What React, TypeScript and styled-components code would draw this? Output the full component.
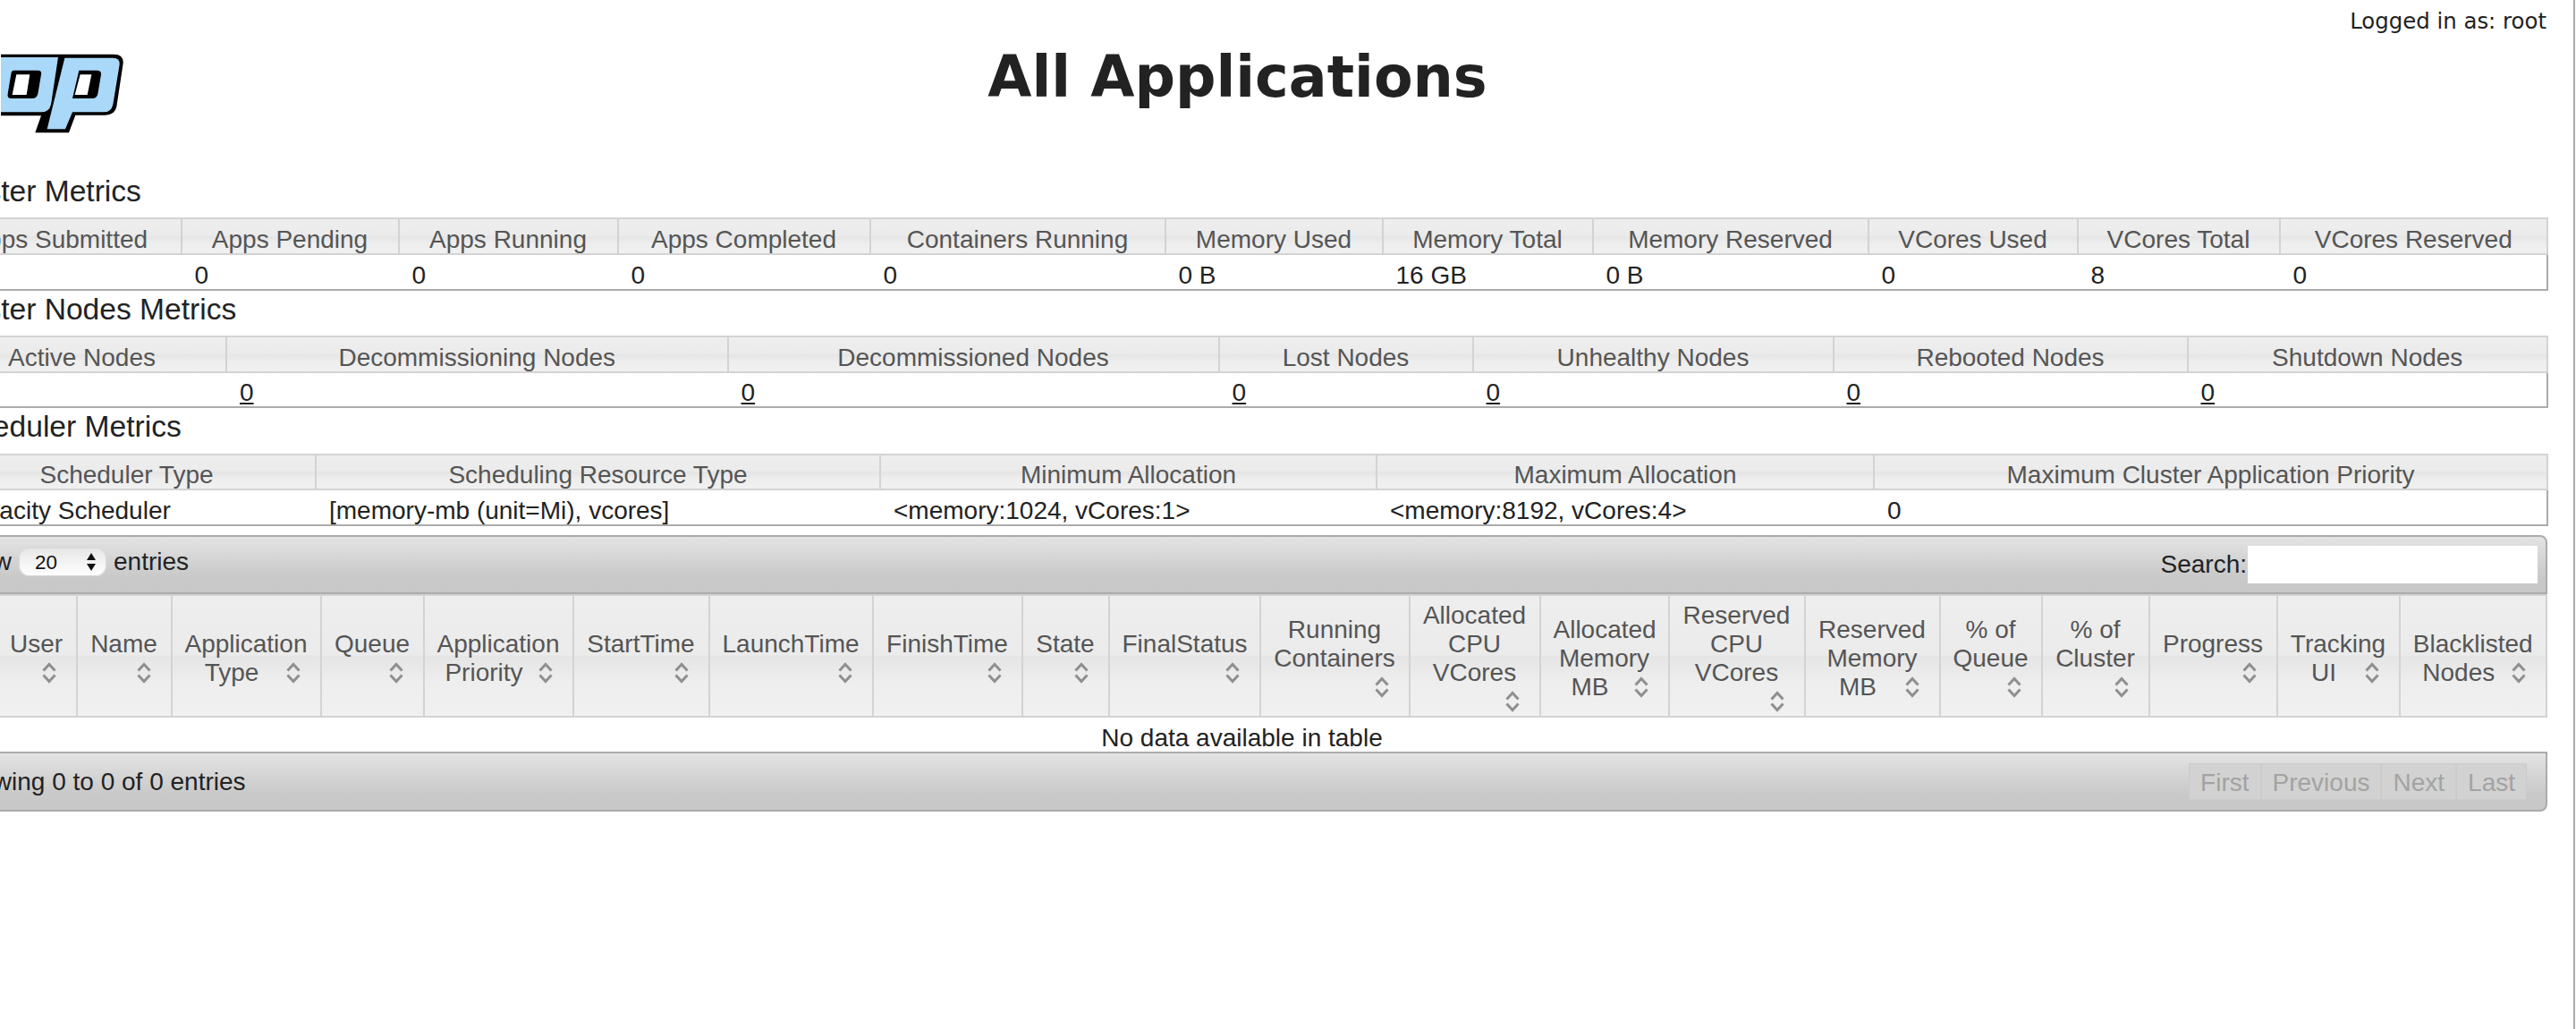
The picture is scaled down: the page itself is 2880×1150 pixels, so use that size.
import React from "react";
import styled, { createGlobalStyle } from "styled-components";

const Global = createGlobalStyle`
  html, body { margin: 0; padding: 0; background: #fff; }
  body { font-family: "Liberation Sans", Arial, sans-serif; font-size: 28px; color: #222; }
`;

const Page = styled.div`
  width: 2877px;
  height: 1150px;
  margin-right: 1px;
  border-right: 2px solid #a9a9a9;
  overflow: hidden;
`;

const Content = styled.div`
  width: 2919px;
  margin-left: -71px;
`;

const Header = styled.header`
  height: 193px;
  display: grid;
  grid-template-columns: 1fr auto 1fr;
`;

const LogoWrap = styled.div`
  padding: 50px 0 0 72px;
`;

const LogoArt = styled.svg`
  display: block;
  filter: blur(0.6px);
`;

const Title = styled.h1`
  margin: 50px 10px 0 0;
  font-family: "DejaVu Sans", Verdana, sans-serif;
  font-weight: 700;
  font-size: 63.6px;
  line-height: 72px;
  color: #222;
`;

const Logged = styled.div`
  justify-self: end;
  padding-top: 10px;
  padding-right: 1px;
  font-family: "DejaVu Sans", Verdana, sans-serif;
  font-size: 24.4px;
  line-height: 28px;
  color: #222;
`;

const SectionTitle = styled.h3<{ $h: number }>`
  margin: 0;
  height: ${(p) => p.$h}px;
  padding-left: 5px;
  font-weight: 400;
  font-size: 33.6px;
  line-height: 42px;
  color: #222;
`;

const headBg = `linear-gradient(#eeeeee 0%, #ebebeb 49.5%, #e5e5e5 50%, #eeeeee 72%, #f0f0f0 100%)`;

const StatTable = styled.table<{ $hp: number; $bp: number }>`
  width: 2918px;
  table-layout: fixed;
  border-collapse: collapse;
  th {
    padding: ${(p) => p.$hp}px 14px 0;
    border: 2px solid #d3d3d3;
    background: ${headBg};
    font-weight: 400;
    line-height: 30px;
    text-align: center;
    color: #555;
    white-space: nowrap;
  }
  td {
    padding: ${(p) => p.$bp}px 14px 0 15px;
    border-bottom: 2px solid #ababab;
    line-height: 30px;
    text-align: left;
    color: #222;
    white-space: nowrap;
  }
  td:first-child { padding-left: 18px; }
  td:last-child { border-right: 2px solid #ababab; }
`;

const NodeLink = styled.a`
  color: #222;
  text-decoration: underline;
`;

const Toolbar = styled.div`
  margin-top: 10px;
  height: 66px;
  box-sizing: border-box;
  display: flex;
  align-items: center;
  justify-content: space-between;
  padding: 0 9px 0 12px;
  border: 2px solid #ababab;
  border-radius: 8px 8px 0 0;
  background: linear-gradient(#e3e3e3 0%, #c9c9c9 72%, #c8c8c8 100%);
`;

const LengthGroup = styled.label`
  display: flex;
  align-items: center;
  gap: 8px;
  padding-bottom: 6px;
`;

const SelectBox = styled.span`
  position: relative;
  display: inline-block;
  height: 32px;
`;

const PageSelect = styled.select`
  display: block;
  appearance: none;
  width: 98px;
  height: 32px;
  padding: 0 0 0 18px;
  border: 0;
  border-radius: 12px;
  background: linear-gradient(#e6e6e6 0%, #f4f4f4 55%, #ffffff 100%);
  box-shadow: inset 0 0 0 1px #d6d6d6;
  font-family: "Liberation Sans", Arial, sans-serif;
  font-size: 22.4px;
  color: #111;
`;

const SelectArrows = styled.svg`
  position: absolute;
  right: 12px;
  top: 6px;
  width: 10px;
  height: 20px;
  pointer-events: none;
`;

const SearchGroup = styled.label`
  display: flex;
  align-items: center;
  color: #222;
`;

const SearchInput = styled.input`
  width: 324px;
  height: 42px;
  box-sizing: border-box;
  margin-left: 1px;
  border: 0;
  padding: 0 6px;
  background: #fff;
`;

const AppTable = styled.table`
  width: 2918px;
  table-layout: fixed;
  border-collapse: collapse;
`;

const AppHead = styled.th`
  padding: 6px 14px 0;
  height: 128px;
  border: 2px solid #d3d3d3;
  background: ${headBg};
  font-weight: 400;
  line-height: 32px;
  color: #555;
  text-align: center;
  vertical-align: middle;
`;

const SortWrap = styled.div`
  display: flow-root;
`;

const SortIcon = styled.svg`
  float: right;
  width: 32px;
  height: 32px;
  filter: blur(0.4px);
`;

const EmptyCell = styled.td`
  padding: 8px 14px 0;
  height: 30px;
  line-height: 30px;
  text-align: center;
  color: #222;
`;

const Footer = styled.div`
  height: 67px;
  box-sizing: border-box;
  display: flex;
  align-items: center;
  justify-content: space-between;
  padding: 0 21px 0 12px;
  border: 2px solid #ababab;
  border-radius: 0 0 8px 8px;
  background: linear-gradient(#e3e3e3 0%, #c9c9c9 72%, #c8c8c8 100%);
  color: #222;
`;

const Pager = styled.div`
  display: flex;
`;

const PageButton = styled.span`
  height: 41px;
  box-sizing: border-box;
  padding: 0 12px;
  border: 1px solid #cbcbcb;
  background: #d2d2d2;
  color: #a3a3a3;
  line-height: 41px;
`;

const Col = styled.col``;

const clusterCols = [272.5, 243, 245, 282, 330, 243, 235, 308, 234, 226, 299.5];
const clusterHeads = ["Apps Submitted", "Apps Pending", "Apps Running", "Apps Completed", "Containers Running", "Memory Used", "Memory Total", "Memory Reserved", "VCores Used", "VCores Total", "VCores Reserved"];
const clusterVals = ["0", "0", "0", "0", "0", "0 B", "16 GB", "0 B", "0", "8", "0"];

const nodeCols = [323, 560.5, 549, 284, 403, 396, 402.5];
const nodeHeads = ["Active Nodes", "Decommissioning Nodes", "Decommissioned Nodes", "Lost Nodes", "Unhealthy Nodes", "Rebooted Nodes", "Shutdown Nodes"];

const schedCols = [423, 631, 555, 556, 753];
const schedHeads = ["Scheduler Type", "Scheduling Resource Type", "Minimum Allocation", "Maximum Allocation", "Maximum Cluster Application Priority"];
const schedVals = ["Capacity Scheduler", "[memory-mb (unit=Mi), vcores]", "<memory:1024, vCores:1>", "<memory:8192, vCores:4>", "0"];

const appCols: [string, number][] = [
  ["ID", 65.5], ["User", 90], ["Name", 106], ["Application Type", 167], ["Queue", 115],
  ["Application Priority", 167], ["StartTime", 152], ["LaunchTime", 183], ["FinishTime", 167],
  ["State", 97], ["FinalStatus", 169], ["Running Containers", 167], ["Allocated CPU VCores", 146],
  ["Allocated Memory MB", 144], ["Reserved CPU VCores", 152], ["Reserved Memory MB", 151],
  ["% of Queue", 114], ["% of Cluster", 120], ["Progress", 143], ["Tracking UI", 137], ["Blacklisted Nodes", 164.5],
];

function Sort() {
  return (
    <SortIcon viewBox="0 0 32 32" fill="none" stroke="#8f8f8f" strokeWidth="3">
      <path d="M9.5 13.5 L16 6.5 L22.5 13.5" />
      <path d="M9.5 18.5 L16 25.5 L22.5 18.5" />
    </SortIcon>
  );
}

function Logo() {
  return (
    <LogoArt width="150" height="105" viewBox="0 0 450 315">
      <path
        d="M0 32 H375 Q412 30 410 62 L388 208 Q382 236 350 236 H250 L228 295 H115 L135 238 H0 Z"
        fill="#000"
      />
      <path d="M0 42 H192 L168 200 Q162 226 135 226 H0 Z" fill="#a9d8f8" />
      <path d="M214 44 H375 Q400 44 398 66 L376 200 Q370 226 345 226 H240 L216 283 H155 Z" fill="#a9d8f8" />
      <path d="M42 86 H125 Q138 86 135 100 L124 165 Q120 180 105 180 H35 Q20 180 23 165 L34 98 Q36 86 42 86 Z" fill="#000" />
      <path d="M52 100 H97 L86 168 H38 Z" fill="#fff" />
      <path d="M262 86 H322 Q338 86 336 100 L325 165 Q322 180 306 180 H240 Z" fill="#000" />
      <path d="M266 100 H304 L290 168 H248 Z" fill="#fff" />
    </LogoArt>
  );
}

export default function App() {
  return (
    <Page>
      <Global />
      <Content>
        <Header>
          <LogoWrap><Logo /></LogoWrap>
          <Title>All Applications</Title>
          <Logged>Logged in as: root</Logged>
        </Header>

        <SectionTitle $h={50}>Cluster Metrics</SectionTitle>
        <StatTable $hp={8} $bp={8}>
          <colgroup>{clusterCols.map((w, i) => <Col key={i} width={w} />)}</colgroup>
          <thead><tr>{clusterHeads.map((h) => <th key={h}>{h}</th>)}</tr></thead>
          <tbody><tr>{clusterVals.map((v, i) => <td key={i}>{v}</td>)}</tr></tbody>
        </StatTable>

        <SectionTitle $h={50}>Cluster Nodes Metrics</SectionTitle>
        <StatTable $hp={8} $bp={7}>
          <colgroup>{nodeCols.map((w, i) => <Col key={i} width={w} />)}</colgroup>
          <thead><tr>{nodeHeads.map((h) => <th key={h}>{h}</th>)}</tr></thead>
          <tbody><tr>{nodeHeads.map((h) => <td key={h}><NodeLink href="#">0</NodeLink></td>)}</tr></tbody>
        </StatTable>

        <SectionTitle $h={51}>Scheduler Metrics</SectionTitle>
        <StatTable $hp={7} $bp={8}>
          <colgroup>{schedCols.map((w, i) => <Col key={i} width={w} />)}</colgroup>
          <thead><tr>{schedHeads.map((h) => <th key={h}>{h}</th>)}</tr></thead>
          <tbody><tr>{schedVals.map((v, i) => <td key={i}>{v}</td>)}</tr></tbody>
        </StatTable>

        <Toolbar>
          <LengthGroup>
            Show
            <SelectBox>
              <PageSelect defaultValue="20">
                <option value="20">20</option>
                <option value="50">50</option>
                <option value="100">100</option>
              </PageSelect>
              <SelectArrows viewBox="0 0 10 20">
                <path d="M5 0 L10 8 H0 Z M5 20 L0 12 H10 Z" fill="#111" />
              </SelectArrows>
            </SelectBox>
            entries
          </LengthGroup>
          <SearchGroup>
            Search:
            <SearchInput type="text" />
          </SearchGroup>
        </Toolbar>

        <AppTable>
          <colgroup>{appCols.map(([h, w]) => <Col key={h} width={w} />)}</colgroup>
          <thead>
            <tr>
              {appCols.map(([h]) => (
                <AppHead key={h}>
                  <SortWrap>{h}<Sort /></SortWrap>
                </AppHead>
              ))}
            </tr>
          </thead>
          <tbody>
            <tr><EmptyCell colSpan={21}>No data available in table</EmptyCell></tr>
          </tbody>
        </AppTable>

        <Footer>
          <span>Showing 0 to 0 of 0 entries</span>
          <Pager>
            <PageButton>First</PageButton>
            <PageButton>Previous</PageButton>
            <PageButton>Next</PageButton>
            <PageButton>Last</PageButton>
          </Pager>
        </Footer>
      </Content>
    </Page>
  );
}
